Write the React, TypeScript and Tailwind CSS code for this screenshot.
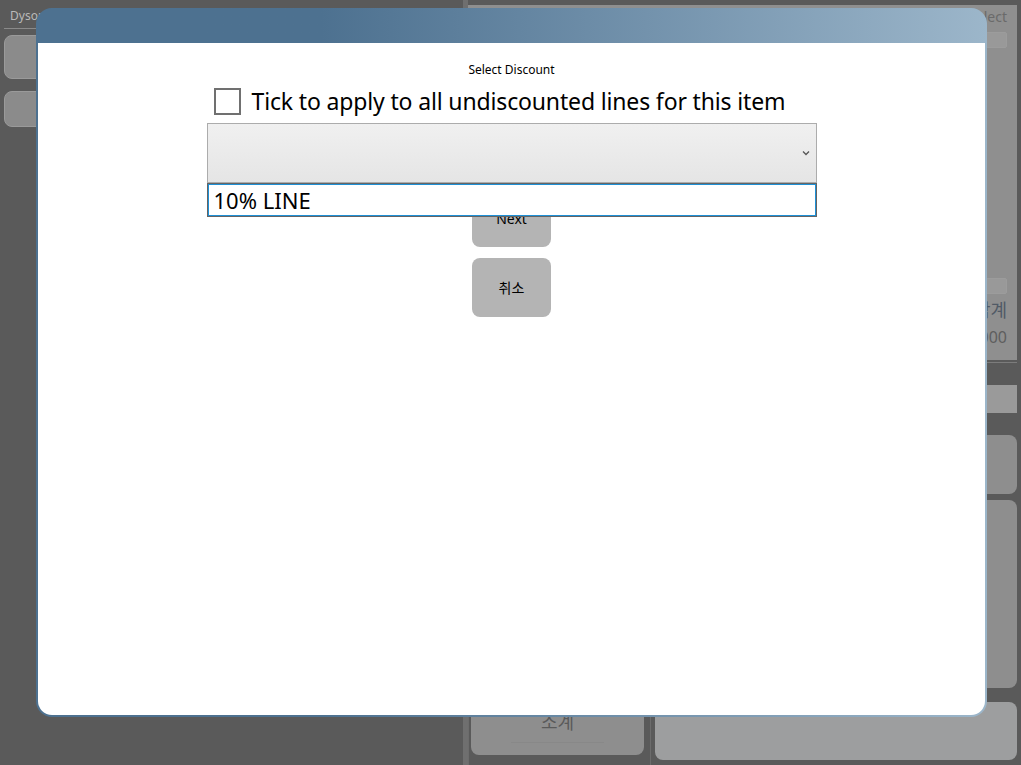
import React from 'react';

const font = { fontFamily: '"Noto Sans", "Noto Sans CJK KR", sans-serif' };

function Background() {
  return (
    <div className="flex h-full w-full">
      {/* left column */}
      <div className="flex w-[463px] flex-col px-[4px] pt-[8px]">
        <div className="border-b border-[#8a8a8a] pb-[4px] pl-[6px] text-[12px] leading-[16px] text-[#b9b9b9]">
          Dyson
        </div>
        <div className="mt-[6px] h-[44px] w-[300px] rounded-[8px] border border-[#9a9a9a] bg-[#8b8b8b]" />
        <div className="mt-[12px] h-[36px] w-[300px] rounded-[8px] border border-[#9a9a9a] bg-[#8b8b8b]" />
      </div>
      <div className="w-[5px] bg-[#6f6f6f]" />
      {/* right column */}
      <div className="flex flex-1 flex-col pr-[4px] pt-[5px]">
        <div className="flex h-[355px] flex-col items-end bg-[#8f8f8f] pr-[10px] text-[#6a6a6a]">
          <div className="mt-[3px] text-[14px] leading-[18px]">Select</div>
          <div className="mt-[6px] flex h-[262px] w-[40px] flex-col justify-between">
            <div className="h-[16px] rounded-[2px] border border-[#9c9c9c] bg-[#999]" />
            <div className="h-[16px] rounded-[2px] border border-[#9c9c9c] bg-[#999]" />
          </div>
          <div className="mt-[4px] text-[18px] leading-[24px] text-[#505a66]">합계</div>
          <div className="mt-[4px] text-[16px] leading-[22px] text-[#5e5e5e]">0.000</div>
        </div>
        <div className="mt-[2px] h-[1px] bg-[#7c7c7c]" />
        <div className="mt-[22px] h-[28px] bg-[#9a9a9a]" />
        <div className="flex flex-1">
          <div className="flex w-[182px] flex-col justify-end border-l border-[#6c6c6c] pb-[10px] pl-[2px] pr-[6px]">
            <div className="flex h-[130px] flex-col items-center justify-end rounded-[8px] bg-[#8e8e8e] pb-[12px]">
              <span className="border-b border-[#888] px-[30px] pb-[6px] text-[18px] text-[#5a5a5a]">소계</span>
            </div>
          </div>
          <div className="flex flex-1 flex-col gap-[6px] border-l border-[#6c6c6c] pb-[5px] pl-[4px] pt-[22px]">
            <div className="h-[59px] rounded-[8px] bg-[#8e8e8e]" />
            <div className="h-[188px] rounded-[8px] bg-[#8e8e8e]" />
            <div className="mt-[8px] flex-1 rounded-[8px] bg-[#9d9e9f]" />
          </div>
        </div>
      </div>
    </div>
  );
}

function Modal() {
  return (
    <div className="absolute left-[36px] top-[8px] flex h-[709px] w-[951px] flex-col rounded-[16px] bg-linear-to-r from-[#4d7190] from-30% to-[#9cb6ca] p-[2px] pt-[35px]">
      <div className="relative flex flex-1 flex-col items-center rounded-b-[14px] bg-white">
        <div className="mt-[19px] text-[12px] leading-[16px] text-black">Select Discount</div>
        <div className="mt-[7px] flex w-[610px] items-center gap-[11px] pl-[7px]">
          <div className="h-[27px] w-[27px] shrink-0 border-2 border-[#707070] bg-white" />
          <span className="whitespace-nowrap text-[23px] leading-[32px] tracking-[-0.15px] text-black">
            Tick to apply to all undiscounted lines for this item
          </span>
        </div>
        <div className="relative mt-[6px] w-[610px]">
          <div className="flex h-[60px] items-center justify-end border border-[#acacac] bg-linear-to-b from-[#f0f0f0] to-[#e5e5e5] pr-[6px]">
            <svg width="8" height="6" viewBox="0 0 8 6">
              <path d="M1 1.5 L4 4.5 L7 1.5" fill="none" stroke="#555" strokeWidth="1.3" />
            </svg>
          </div>
          <div className="absolute left-0 top-[60px] z-10 h-[34px] w-[610px] border border-[#646464] bg-white">
            <div className="flex h-full items-center border border-[#1e90d6] pl-[5px] text-[22px] leading-[28px] text-black">
              10% LINE
            </div>
          </div>
        </div>
        <div className="mt-[7px] flex flex-col items-center gap-[11px]">
          <button className="flex h-[57px] w-[79px] items-center justify-center rounded-[8px] bg-[#b4b4b4] text-[14px] text-black">
            Next
          </button>
          <button className="flex h-[59px] w-[79px] items-center justify-center rounded-[8px] bg-[#b4b4b4] text-[14px] text-black">
            취소
          </button>
        </div>
      </div>
    </div>
  );
}

export default function App() {
  return (
    <div className="relative h-[765px] w-[1021px] overflow-hidden bg-[#5a5a5a]" style={font}>
      <Background />
      <Modal />
    </div>
  );
}
